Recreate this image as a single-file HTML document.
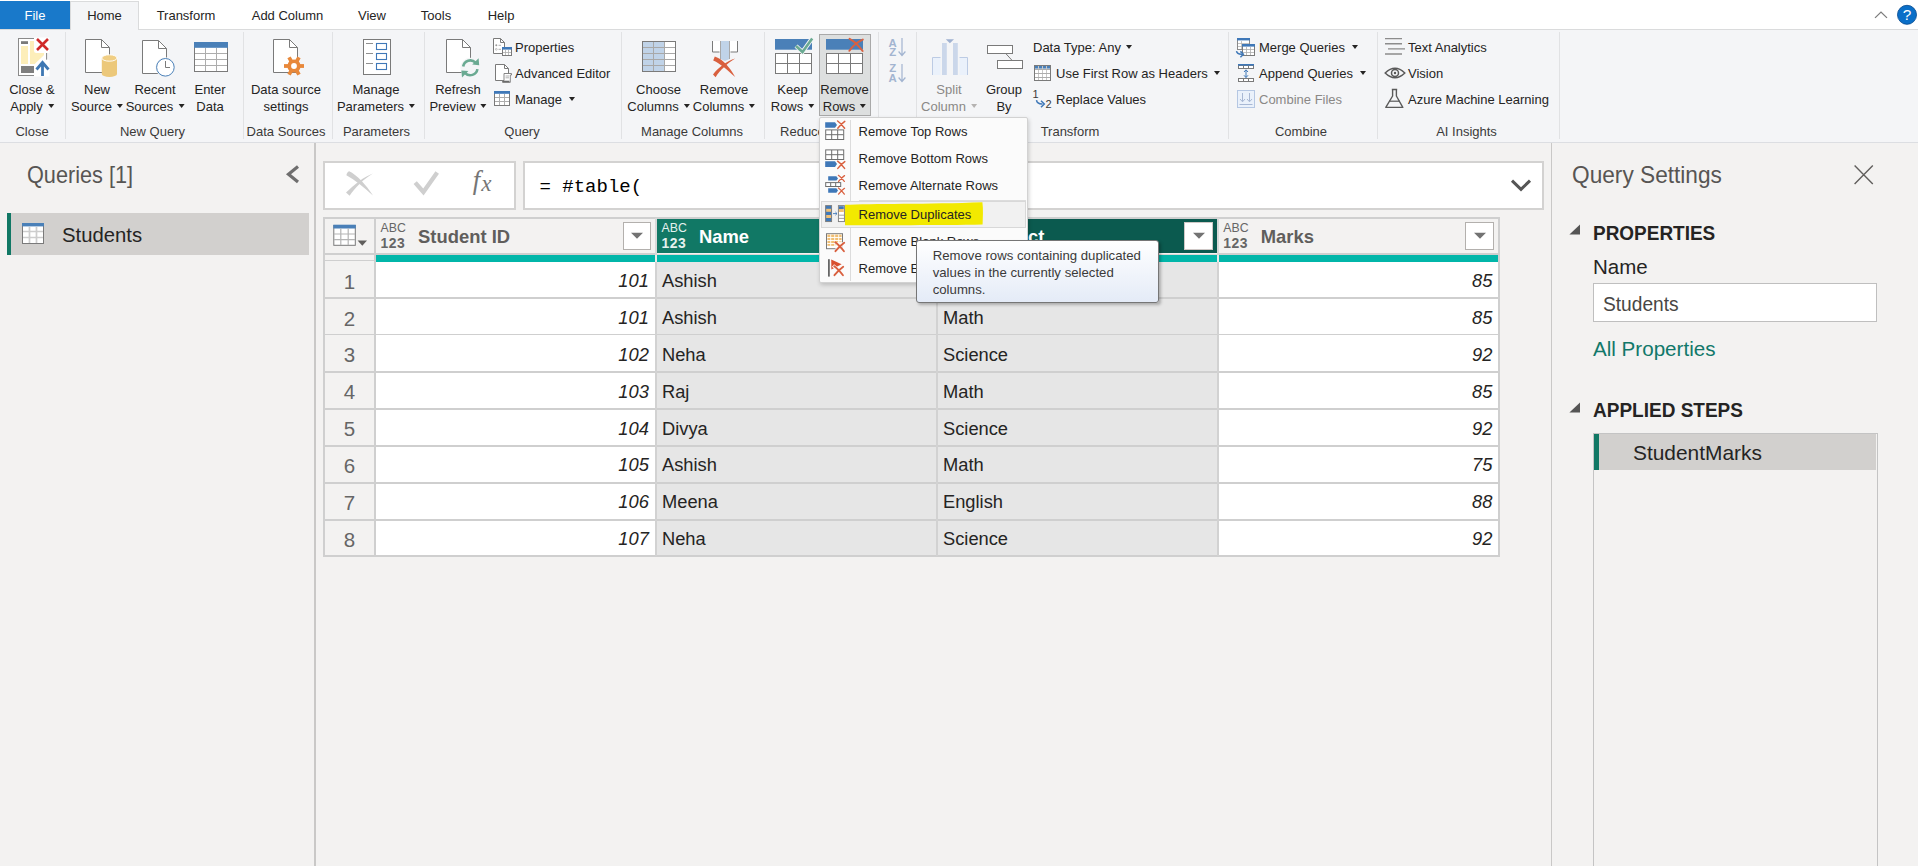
<!DOCTYPE html>
<html><head><meta charset="utf-8"><title>Power Query Editor</title>
<style>
*{box-sizing:border-box;margin:0;padding:0}
html,body{width:1918px;height:866px;overflow:hidden;background:#f3f2f1;font-family:"Liberation Sans",sans-serif;color:#252423}
.abs,.abs div,.abs svg,.abs span.p{position:absolute}
svg{overflow:visible}
#tabs{left:0;top:0;width:1918px;height:30px;background:#fff;border-bottom:1px solid #dadbdc}
#tabs .t{top:0;height:29px;font-size:13px;line-height:31px;text-align:center;color:#252423;white-space:nowrap}
#tabs #file{left:0;top:1px;width:70px;height:28px;background:#1979ca;color:#fff;line-height:29px}
#tabs #home{left:70px;top:1px;width:69px;height:29px;background:#f4f5f7;border:1px solid #dadbdc;border-bottom:none;line-height:28px}
#ribbon{left:0;top:30px;width:1918px;height:113px;background:#f4f5f7;border-bottom:1.3px solid #dcdee2}
.big{font-size:13px;line-height:17px;text-align:center;white-space:nowrap;color:#252423;top:81px;transform:translateX(-50%)}
.sm{font-size:13px;line-height:16px;white-space:nowrap;color:#252423}
.dis{color:#8a8886!important}
.grp{font-size:13px;line-height:15px;text-align:center;white-space:nowrap;color:#3b3a39;top:124px;transform:translateX(-50%)}
.sep{top:32px;width:1px;height:107px;background:#e1e2e4}
i.c{display:inline-block;width:0;height:0;border-left:3.5px solid transparent;border-right:3.5px solid transparent;border-top:4px solid #252423;vertical-align:middle;margin-left:5px;margin-top:-4px}
.dis i.c{border-top-color:#b5b3b1}
#menu .mi{left:38.8px;font-size:13px;line-height:16px;white-space:nowrap;color:#252423}
</style></head><body>
<div id="tabs" class="abs">
 <div id="file" class="t">File</div>
 <div id="home" class="t">Home</div>
 <div class="t" style="left:156px;width:60px">Transform</div>
 <div class="t" style="left:251px;width:73px">Add Column</div>
 <div class="t" style="left:358px;width:28px">View</div>
 <div class="t" style="left:420px;width:32px">Tools</div>
 <div class="t" style="left:487px;width:28px">Help</div>
 <svg style="left:1872px;top:8px" width="18" height="12" viewBox="1872 8 18 12"><path d="M1875 17.9 L1881 12.1 L1887 17.9" fill="none" stroke="#7c7c7c" stroke-width="1.3"/></svg>
 <svg style="left:1896px;top:4px" width="22" height="22" viewBox="1896 4 22 22"><circle cx="1907" cy="14.8" r="9.5" fill="#0a6fc8" stroke="#0b4f94" stroke-width=".9"/><text x="1907" y="20.4" font-family="Liberation Sans, sans-serif" font-size="15.4" fill="#fff" text-anchor="middle">?</text></svg>
</div>
<div id="ribbon" class="abs"></div>
<div id="rc" class="abs" style="left:0;top:0;width:1918px;height:142px">
<!-- separators -->
<div class="sep" style="left:65px"></div><div class="sep" style="left:243px"></div><div class="sep" style="left:332px"></div><div class="sep" style="left:424px"></div><div class="sep" style="left:621px"></div><div class="sep" style="left:764px"></div><div class="sep" style="left:878px"></div><div class="sep" style="left:916px"></div><div class="sep" style="left:1228px"></div><div class="sep" style="left:1377px"></div><div class="sep" style="left:1559px"></div>
<!-- group labels -->
<div class="grp" style="left:32px">Close</div>
<div class="grp" style="left:152.5px">New Query</div>
<div class="grp" style="left:286px">Data Sources</div>
<div class="grp" style="left:376.5px">Parameters</div>
<div class="grp" style="left:522px">Query</div>
<div class="grp" style="left:692px">Manage Columns</div>
<div class="grp" style="left:820.5px">Reduce Rows</div>
<div class="grp" style="left:897px">Sort</div>
<div class="grp" style="left:1070px">Transform</div>
<div class="grp" style="left:1301px">Combine</div>
<div class="grp" style="left:1466.5px">AI Insights</div>

<!-- Close & Apply -->
<svg style="left:17px;top:37px" width="33" height="40" viewBox="17 37 33 40">
 <rect x="18.5" y="38.5" width="28" height="37" fill="#fff" stroke="#8a8a8a"/>
 <rect x="21" y="41.2" width="7" height="2.8" fill="#7a7a7a"/>
 <rect x="21" y="46" width="7" height="18" fill="#fdeeba"/>
 <path d="M30 41 H44 V55 L35 64 H30 Z" fill="#fdeeba"/>
 <rect x="21" y="66" width="13" height="7" fill="#7f7f7f"/>
 <path d="M34 37.5 H49.5 V53 H36.5 Q34 53 34 50.5 Z" fill="#fff"/>
 <path d="M44 53 V56 L38 61 L34 65 V76.5 H49.5 V60 L46.6 59.6 V53 Z" fill="#fff"/>
 <path d="M46.6 53 V59.6" stroke="#8a8a8a" fill="none"/>
 <path d="M37 39 L48 50 M48 39 L37 50" stroke="#d02a2a" stroke-width="2.6" fill="none"/>
 <path d="M42.5 76 V64 M36.5 69.5 L42.5 62.5 L48.5 69.5" stroke="#3f78b3" stroke-width="2.8" fill="none"/>
</svg>
<div class="big" style="left:32px">Close &amp;<br>Apply<i class="c"></i></div>

<!-- New Source -->
<svg style="left:84px;top:38px" width="34" height="40" viewBox="84 38 34 40">
 <path d="M85.5 39.5 H101.5 L109.5 47.5 V72.5 H85.5 Z" fill="#fff" stroke="#7a7a7a"/>
 <path d="M101.5 39.5 V47.5 H109.5" fill="none" stroke="#7a7a7a"/>
 <path d="M101.8 58 V74 A7.6 3 0 0 0 117 74 V58 Z" fill="#ecc87a"/>
 <ellipse cx="109.4" cy="58" rx="7.6" ry="3.2" fill="#f0ce84" stroke="#fff" stroke-width="0.9"/>
 <path d="M101.8 58 V54.8" stroke="#ecc87a" stroke-width="0" />
</svg>
<div class="big" style="left:97px">New<br>Source<i class="c"></i></div>

<!-- Recent Sources -->
<svg style="left:141px;top:39px" width="36" height="40" viewBox="141 39 36 40">
 <path d="M142.5 40.5 H158.5 L166.5 48.5 V73.5 H142.5 Z" fill="#fff" stroke="#7a7a7a"/>
 <path d="M158.5 40.5 V48.5 H166.5" fill="none" stroke="#7a7a7a"/>
 <circle cx="165.4" cy="67.3" r="9" fill="#fff" stroke="#f4f5f7" stroke-width="2"/>
 <circle cx="165.4" cy="67.3" r="8.8" fill="#fff" stroke="#4a80b8" stroke-width="1"/>
 <path d="M165.5 61 V67.5 H170" fill="none" stroke="#7a7a7a"/>
</svg>
<div class="big" style="left:155px">Recent<br>Sources<i class="c"></i></div>

<!-- Enter Data -->
<svg style="left:193px;top:41px" width="36" height="32" viewBox="193 41 36 32">
 <rect x="194.5" y="42.5" width="33" height="29" fill="#fff" stroke="#7a7a7a"/>
 <rect x="194" y="42" width="34" height="5.8" fill="#4a80b8"/>
 <path d="M205.5 48 V71 M216.5 48 V71 M195 53.5 H227 M195 59.5 H227 M195 65.5 H227" stroke="#adadad" fill="none"/>
</svg>
<div class="big" style="left:210px">Enter<br>Data</div>

<!-- Data source settings -->
<svg style="left:272px;top:38px" width="34" height="40" viewBox="272 38 34 40">
 <path d="M273.5 39.5 H289.5 L297.5 47.5 V72.5 H273.5 Z" fill="#fff" stroke="#7a7a7a"/>
 <path d="M289.5 39.5 V47.5 H297.5" fill="none" stroke="#7a7a7a"/>
 <circle cx="294" cy="66" r="11" fill="#fff" opacity="0"/>
 <g transform="translate(294 66)">
  <circle r="10.5" fill="#f4f5f7" opacity="0"/>
  <g fill="#e8883a">
   <circle r="6.6"/>
   <rect x="-10" y="-1.9" width="20" height="3.8"/>
   <rect x="-10" y="-1.9" width="20" height="3.8" transform="rotate(60)"/>
   <rect x="-10" y="-1.9" width="20" height="3.8" transform="rotate(120)"/>
  </g>
  <circle r="2.9" fill="#fff"/>
 </g>
</svg>
<div class="big" style="left:286px">Data source<br>settings</div>

<!-- Manage Parameters -->
<svg style="left:362px;top:38px" width="30" height="38" viewBox="362 38 30 38">
 <rect x="363.5" y="39.5" width="27" height="35" fill="#fff" stroke="#7a7a7a"/>
 <path d="M366 43.5 H373 M366 53.5 H373 M366 63.5 H373" stroke="#8f8f8f" fill="none"/>
 <rect x="376.5" y="43.5" width="10" height="6" fill="#fff" stroke="#3f78b8" stroke-width="1.1"/>
 <rect x="376.5" y="53.5" width="10" height="6" fill="#fff" stroke="#3f78b8" stroke-width="1.1"/>
 <rect x="376.5" y="63.5" width="10" height="6" fill="#fff" stroke="#3f78b8" stroke-width="1.1"/>
</svg>
<div class="big" style="left:376px">Manage<br>Parameters<i class="c"></i></div>

<!-- Refresh Preview -->
<svg style="left:445px;top:38px" width="36" height="40" viewBox="445 38 36 40">
 <path d="M446.5 39.5 H462.5 L470.5 47.5 V72.5 H446.5 Z" fill="#fff" stroke="#7a7a7a"/>
 <path d="M462.5 39.5 V47.5 H470.5" fill="none" stroke="#7a7a7a"/>
 <circle cx="470.3" cy="67.8" r="10" fill="#f4f5f7"/>
 <g fill="none" stroke="#6aaa92" stroke-width="2.6">
  <path d="M463.2 66.5 A7.2 7.2 0 0 1 475.5 62.6"/>
  <path d="M477.4 69.1 A7.2 7.2 0 0 1 465.1 73"/>
 </g>
 <path d="M472.2 64.6 L479.2 65.2 L478.6 58.2 Z" fill="#6aaa92"/>
 <path d="M468.4 71 L461.4 70.4 L462 77.4 Z" fill="#6aaa92"/>
</svg>
<div class="big" style="left:458px">Refresh<br>Preview<i class="c"></i></div>

<!-- Properties -->
<svg style="left:492px;top:37px" width="22" height="20" viewBox="492 37 22 20">
 <path d="M493.5 38.5 H500.5 L504.5 42.5 V53.5 H493.5 Z" fill="#fff" stroke="#7a7a7a"/>
 <path d="M500.5 38.5 V42.5 H504.5" fill="none" stroke="#7a7a7a"/>
 <circle cx="496.3" cy="45.3" r="1" fill="#9a9a9a"/><circle cx="496.3" cy="49.3" r="0.9" fill="none" stroke="#9a9a9a" stroke-width=".6"/>
 <path d="M498.5 45.3 H501 M498.5 49.3 H501" stroke="#9a9a9a" stroke-width=".8"/>
 <rect x="502.5" y="47.5" width="9" height="8" fill="#fff" stroke="#7a7a7a"/>
 <rect x="502" y="47" width="10" height="2.6" fill="#3f78b8"/>
 <path d="M505.5 50 V55 M508.5 50 V55 M503 52.5 H511" stroke="#adadad" stroke-width=".8"/>
</svg>
<div class="sm" style="left:515px;top:40px">Properties</div>
<!-- Advanced Editor -->
<svg style="left:494px;top:63px" width="20" height="21" viewBox="494 63 20 21">
 <path d="M495.5 64.5 H504.5 L508.5 68.5 V80.5 H495.5 Z" fill="#fff" stroke="#7a7a7a"/>
 <path d="M504.5 64.5 V68.5 H508.5" fill="none" stroke="#7a7a7a"/>
 <path d="M504 73.5 H511.5 V75 H510.3 V82.4 H502.6 V80.6 H504 Z" fill="#fff" stroke="#7a7a7a" stroke-width=".9"/>
 <path d="M502.6 81.5 H509.5" stroke="#6a6a6a" stroke-width="1.6"/>
 <path d="M505.5 76 H509 M505.5 77.8 H509" stroke="#8f8f8f" stroke-width=".7"/>
</svg>
<div class="sm" style="left:515px;top:66px">Advanced Editor</div>
<!-- Manage -->
<svg style="left:493px;top:90px" width="18" height="17" viewBox="493 90 18 17">
 <rect x="494.5" y="91.5" width="15" height="14" fill="#fff" stroke="#7a7a7a"/>
 <rect x="494" y="91" width="16" height="2.8" fill="#3f78b8"/>
 <path d="M499.5 94 V105 M504.5 94 V105 M495 97.5 H509 M495 101.5 H509" stroke="#adadad"/>
</svg>
<div class="sm" style="left:515px;top:92px">Manage<i class="c" style="margin-left:7px"></i></div>
<!-- Choose Columns -->
<svg style="left:641px;top:40px" width="36" height="33" viewBox="641 40 36 33">
 <rect x="642.5" y="41.5" width="33" height="30" fill="#fff" stroke="#7a7a7a"/>
 <rect x="643" y="42" width="21.5" height="29" fill="#c0d3e8"/>
 <path d="M653.5 42 V71 M664.5 42 V71 M643 47.5 H675 M643 53.5 H675 M643 59.5 H675 M643 65.5 H675" stroke="#a8a8a8" fill="none"/>
 <rect x="642.5" y="41.5" width="33" height="30" fill="none" stroke="#7a7a7a"/>
</svg>
<div class="big" style="left:658.5px">Choose<br>Columns<i class="c"></i></div>
<!-- Remove Columns -->
<svg style="left:711px;top:40px" width="28" height="38" viewBox="711 40 28 38">
 <rect x="713" y="41" width="24" height="10.6" fill="#fff"/>
 <path d="M712.5 41 V52 H719.5 M730.5 52 H737.5 V41" fill="none" stroke="#7a7a7a" stroke-linejoin="miter"/>
 <path d="M720.5 41 V59 L725 61 L729.5 59 V41 Z" fill="#c0d3e8"/>
 <path d="M720.5 41 V59 M729.5 41 V59" stroke="#a8a8a8" fill="none"/>
 <path d="M714.8 56.6 C722.5 59 730 67.5 735.2 77 C728 70.5 720.5 63.5 713.2 60.4 Z" fill="#d9603f"/>
 <path d="M735.2 58.6 C727 61 718.5 67.5 713 74.4 L715.6 77.2 C720 70.5 727 63.5 735.2 58.6 Z" fill="#d9603f"/>
</svg>
<div class="big" style="left:724px">Remove<br>Columns<i class="c"></i></div>
<!-- Keep Rows -->
<svg style="left:774px;top:37px" width="40" height="38" viewBox="774 37 40 38">
 <rect x="775" y="39" width="37" height="10.7" fill="#4a80b8"/>
 <rect x="775.5" y="53.5" width="36" height="20" fill="#fff" stroke="#7a7a7a"/>
 <path d="M787.5 54 V73 M799.5 54 V73 M776 63.5 H811" stroke="#7a7a7a" fill="none"/>
 <path d="M796 46 L802.5 52 L812.2 38.4" fill="none" stroke="#f4f5f7" stroke-width="4.4"/>
 <path d="M796 46 L802.5 52 L812.2 38.4" fill="none" stroke="#6aaa92" stroke-width="2.6"/>
</svg>
<div class="big" style="left:792.5px">Keep<br>Rows<i class="c"></i></div>
<!-- Remove Rows (pressed) -->
<div style="left:819px;top:34px;width:52px;height:82px;background:#dddfdf;border:1px solid #a9a9a9"></div>
<svg style="left:825px;top:37px" width="40" height="38" viewBox="825 37 40 38">
 <rect x="826" y="39" width="37" height="10.7" fill="#4a80b8"/>
 <rect x="826.5" y="53.5" width="36" height="20" fill="#fff" stroke="#7a7a7a"/>
 <path d="M838.5 54 V73 M850.5 54 V73 M827 63.5 H862" stroke="#7a7a7a" fill="none"/>
 <path d="M849.6 38.8 C854 41 859 46 862.6 51" stroke="#d9603f" stroke-width="2" fill="none" stroke-linecap="round"/>
 <path d="M862.8 39.6 C857 42 852 47 849.4 50.8" stroke="#d9603f" stroke-width="2" fill="none" stroke-linecap="round"/>
</svg>
<div class="big" style="left:844.5px">Remove<br>Rows<i class="c"></i></div>
<!-- Sort icons -->
<svg style="left:886px;top:36px" width="22" height="48" viewBox="886 36 22 48">
 <g font-family="Liberation Sans, sans-serif" font-weight="bold" font-size="11.4" fill="#a2b4d0">
  <text x="888.6" y="46.7">A</text><text x="889.2" y="55.8">Z</text>
  <text x="889.2" y="71.8">Z</text><text x="888.6" y="81.5">A</text>
 </g>
 <g fill="none" stroke="#a2b4d0" stroke-width="1.2">
  <path d="M902 38 V55.5 M898.6 51.5 L902 55.5 L905.4 51.5"/>
  <path d="M902 64 V81.5 M898.6 77.5 L902 81.5 L905.4 77.5"/>
 </g>
</svg>
<!-- Split Column (disabled) -->
<svg style="left:931px;top:38px" width="38" height="38" viewBox="931 38 38 38">
 <path d="M932.5 75 V57.5 H940.5 V75 Z" fill="#eaf1fb"/><path d="M932.5 75 V57.5 H940.5" fill="none" stroke="#bccbe4"/>
 <path d="M959.5 75 V57.5 H967.5 V75 Z" fill="#eaf1fb"/><path d="M959.5 57.5 H967.5 V75" fill="none" stroke="#bccbe4"/>
 <rect x="942" y="43" width="4.8" height="32" fill="#cbd7ea"/>
 <rect x="953" y="43" width="4.8" height="32" fill="#cbd7ea"/>
 <path d="M945.8 39.2 H954 L949.9 43.2 Z" fill="#9fb1d0"/>
</svg>
<div class="big dis" style="left:949px">Split<br>Column<i class="c"></i></div>
<!-- Group By -->
<svg style="left:986px;top:44px" width="38" height="26" viewBox="986 44 38 26">
 <rect x="987.5" y="45.5" width="25" height="8" fill="#fff" stroke="#7a7a7a"/>
 <rect x="997.5" y="60.5" width="25" height="8" fill="#fff" stroke="#7a7a7a"/>
 <path d="M1006 53.8 L1012 60.3" stroke="#7a7a7a" fill="none"/>
</svg>
<div class="big" style="left:1004px">Group<br>By</div>
<!-- Data type etc -->
<div class="sm" style="left:1033px;top:40px">Data Type: Any<i class="c" style="margin-left:5px"></i></div>
<svg style="left:1033px;top:64px" width="20" height="18" viewBox="1033 64 20 18">
 <rect x="1034.5" y="65.5" width="16" height="15" fill="#fff" stroke="#7a7a7a"/>
 <rect x="1035" y="66" width="15" height="2.6" fill="#4a80b8"/>
 <path d="M1038.5 66 V80 M1042.5 66 V80 M1046.5 66 V80" stroke="#c8c8c8"/><path d="M1035 69.5 H1050 M1035 73.5 H1050 M1035 77.5 H1050" stroke="#adadad"/>
</svg>
<div class="sm" style="left:1056px;top:66px">Use First Row as Headers<i class="c" style="margin-left:6px"></i></div>
<svg style="left:1032px;top:88px" width="22" height="22" viewBox="1032 88 22 22">
 <g font-family="Liberation Sans, sans-serif" font-size="11" fill="#3b3a39"><text x="1032.6" y="98.2">1</text><text x="1045.6" y="108.4">2</text></g>
 <path d="M1036.5 100.2 Q1037 104.2 1042.5 104" fill="none" stroke="#3f78b8" stroke-width="1.5"/>
 <path d="M1041 100.8 L1044.3 104 L1041 107.2" fill="none" stroke="#3f78b8" stroke-width="1.5"/>
</svg>
<div class="sm" style="left:1056px;top:92px">Replace Values</div>
<!-- Merge Queries -->
<svg style="left:1235px;top:37px" width="22" height="21" viewBox="1235 37 22 21">
 <rect x="1237.5" y="38.5" width="12" height="11" fill="#fff" stroke="#8a8a8a"/>
 <rect x="1237" y="38" width="13" height="2.4" fill="#3f78b8"/>
 <path d="M1241.5 41 V49 M1238 43.5 H1249 M1238 46.5 H1249" stroke="#b5b5b5" stroke-width=".8"/>
 <rect x="1242.5" y="44.5" width="12" height="11" fill="#fff" stroke="#7a7a7a"/>
 <rect x="1242" y="44" width="13" height="2.6" fill="#3f78b8"/>
 <path d="M1246.5 47 V55 M1250.5 47 V55 M1243 49.5 H1254 M1243 52.5 H1254" stroke="#adadad" stroke-width=".8"/>
 <path d="M1236.5 51.2 Q1237 54.4 1242 54.2" fill="none" stroke="#3f78b8" stroke-width="1.5"/>
 <path d="M1240.4 51.4 L1243.4 54.3 L1240.4 57.2" fill="none" stroke="#3f78b8" stroke-width="1.5"/>
</svg>
<div class="sm" style="left:1259px;top:40px">Merge Queries<i class="c" style="margin-left:7px"></i></div>
<!-- Append Queries -->
<svg style="left:1237px;top:63px" width="18" height="20" viewBox="1237 63 18 20">
 <rect x="1238.5" y="65.5" width="15" height="3" fill="#fff" stroke="#7a7a7a"/>
 <rect x="1238" y="64" width="16" height="1.6" fill="#3f78b8"/>
 <path d="M1243.5 66 V68 M1248.5 66 V68" stroke="#7a7a7a"/>
 <rect x="1238.5" y="78.5" width="15" height="3" fill="#fff" stroke="#7a7a7a"/>
 <path d="M1243.5 79 V81 M1248.5 79 V81" stroke="#7a7a7a"/>
 <path d="M1246 70 V77.5 M1244 72 L1246 69.8 L1248 72 M1244 75.3 L1246 77.5 L1248 75.3" fill="none" stroke="#3f78b8" stroke-width="1"/>
</svg>
<div class="sm" style="left:1259px;top:66px">Append Queries<i class="c" style="margin-left:7px"></i></div>
<!-- Combine Files -->
<svg style="left:1236px;top:89px" width="20" height="20" viewBox="1236 89 20 20">
 <rect x="1237.5" y="90.5" width="17" height="17" fill="#eaf1fb" stroke="#b5c7e3"/>
 <path d="M1242.5 93 V101.5 M1240 99 L1242.5 101.8 L1245 99 M1249.5 93 V101.5 M1247 99 L1249.5 101.8 L1252 99" fill="none" stroke="#a8b8d4" stroke-width="1"/>
 <path d="M1239.5 104.5 H1252.5" stroke="#a8b8d4"/>
</svg>
<div class="sm dis" style="left:1259px;top:92px">Combine Files</div>
<!-- Text Analytics -->
<svg style="left:1384px;top:37px" width="22" height="19" viewBox="1384 37 22 19">
 <path d="M1385 38.6 H1402 M1385 43.7 H1402 M1388 48.9 H1405 M1385 54 H1402" stroke="#8c8c8c" stroke-width="1.4" fill="none"/>
</svg>
<div class="sm" style="left:1408px;top:40px">Text Analytics</div>
<!-- Vision -->
<svg style="left:1384px;top:66px" width="22" height="14" viewBox="1384 66 22 14">
 <path d="M1385.2 73 Q1395 63.5 1404.8 73 Q1395 82.5 1385.2 73 Z" fill="none" stroke="#5a5a5a" stroke-width="1.5"/>
 <circle cx="1395" cy="73" r="3.5" fill="none" stroke="#5a5a5a" stroke-width="1.5"/>
 <circle cx="1395" cy="73" r="1.2" fill="#5a5a5a"/>
</svg>
<div class="sm" style="left:1408px;top:66px">Vision</div>
<!-- Azure ML -->
<svg style="left:1384px;top:88px" width="20" height="21" viewBox="1384 88 20 21">
 <path d="M1391.8 89.5 H1397.2 M1392.6 89.8 V96 L1385.8 107.4 H1402.8 L1396.4 96 V89.8" fill="none" stroke="#5a5a5a" stroke-width="1.4" stroke-linejoin="round"/>
 <path d="M1389.2 101.2 H1399.6" stroke="#5a5a5a" stroke-width="1.2"/>
</svg>
<div class="sm" style="left:1408px;top:92px">Azure Machine Learning</div>
</div>
<div id="left" class="abs" style="left:0;top:143px;width:317px;height:723px">
 <div style="left:313.9px;top:0.3px;width:1.8px;height:723px;background:#c9c8c7"></div>
 <div style="left:27px;top:16.5px;font-size:24px;line-height:30px;white-space:nowrap;color:#575553;transform:scaleX(.903);transform-origin:0 0">Queries [1]</div>
 <svg style="left:284px;top:20px" width="18" height="22" viewBox="284 163 18 22"><path d="M298 166.5 L288.5 174.2 L298 182" fill="none" stroke="#6e6e6e" stroke-width="3.2"/></svg>
 <div style="left:7px;top:70px;width:302px;height:42px;background:#d2d0ce"></div>
 <div style="left:7px;top:70px;width:4px;height:42px;background:#117865"></div>
 <svg style="left:21px;top:79px" width="24" height="22" viewBox="21 222 24 22">
  <rect x="22.5" y="223.5" width="21" height="20" fill="#fff" stroke="#7a7a7a"/>
  <rect x="22" y="223" width="22" height="3.4" fill="#4a80b8"/>
  <path d="M29.5 227 V243 M36.5 227 V243 M23 231.5 H43 M23 237.5 H43" stroke="#cdcdcd" stroke-width="1.7"/>
 </svg>
 <div style="left:62px;top:78px;font-size:20.3px;line-height:28px;white-space:nowrap;color:#252423">Students</div>
</div>
<div id="center" class="abs" style="left:0;top:0;width:1551px;height:866px">
<div style="left:323px;top:161px;width:193px;height:49px;background:#fff;border:2.2px solid #d3d2d1"></div>
<div style="left:522.5px;top:161px;width:1021.5px;height:49px;background:#fff;border:2.2px solid #d3d2d1"></div>
<svg style="left:345px;top:170px" width="30" height="28" viewBox="345 170 30 28"><path d="M349.2 171.2 C356.5 174.5 366 184.5 373 195.6 C364.5 187.5 355 180 346.4 175.2 C346.8 173 347.6 171.8 349.2 171.2 Z" fill="#cfcfcf"/><path d="M373 173.4 C364 176.5 354 184.5 346 192.6 L349.6 195.8 C355 187.5 363.5 179 373 173.4 Z" fill="#cfcfcf"/></svg>
<svg style="left:413px;top:170px" width="28" height="28" viewBox="413 170 28 28"><path d="M415.2 182.6 L423.4 192 L437.2 172.6" stroke="#cfcfcf" stroke-width="4.3" fill="none" stroke-linejoin="miter"/></svg>
<div style="left:472.8px;top:163.2px;font-family:'Liberation Serif',serif;font-style:italic;font-size:26.5px;line-height:34px;color:#757575;white-space:nowrap;letter-spacing:0.6px">f<span style="font-size:23px;position:relative;top:2.3px;left:0.5px">x</span></div>
<div style="left:539.5px;top:173.5px;font-family:'Liberation Mono',monospace;font-size:19px;line-height:26px;color:#000;white-space:pre">= #table(</div>
<svg style="left:1510px;top:178px" width="22" height="14" viewBox="1510 178 22 14"><path d="M1512 180.6 L1521 189.4 L1530 180.6" fill="none" stroke="#555" stroke-width="3"/></svg>
<div style="left:324px;top:218px;width:1174.8px;height:337.9px;background:#fff"></div>
<div style="left:324px;top:218px;width:51.1px;height:337.9px;background:#f3f2f1"></div>
<div style="left:375.1px;top:218px;width:1123.7px;height:36px;background:#f3f2f1"></div>
<div style="left:656.9px;top:218.9px;width:279.9px;height:34.6px;background:#117865"></div>
<div style="left:937.7px;top:218.9px;width:280.1px;height:34.6px;background:#0b5a4f"></div>
<div style="left:656px;top:261.9px;width:561.8px;height:294px;background:#e6e6e6"></div>
<div style="left:376px;top:255px;width:1122.8px;height:6.9px;background:#01b6a9"></div>
<div style="left:323.15px;top:217.15px;width:1176.5px;height:1.7px;background:#cfcfcf"></div>
<div style="left:324px;top:253.15px;width:332px;height:1.7px;background:#cfcfcf"></div>
<div style="left:1217.8px;top:253.15px;width:281px;height:1.7px;background:#cfcfcf"></div>
<div style="left:656px;top:253.5px;width:561.8px;height:1.4px;background:#ddd8d6"></div>
<div style="left:324px;top:260.1px;width:51.1px;height:1.4px;background:#cfcfcf"></div>
<div style="left:323.15px;top:296.85px;width:1176.5px;height:1.7px;background:#cfcfcf"></div>
<div style="left:323.15px;top:333.75px;width:1176.5px;height:1.7px;background:#cfcfcf"></div>
<div style="left:323.15px;top:370.85px;width:1176.5px;height:1.7px;background:#cfcfcf"></div>
<div style="left:323.15px;top:408.05px;width:1176.5px;height:1.7px;background:#cfcfcf"></div>
<div style="left:323.15px;top:445.15px;width:1176.5px;height:1.7px;background:#cfcfcf"></div>
<div style="left:323.15px;top:482.05px;width:1176.5px;height:1.7px;background:#cfcfcf"></div>
<div style="left:323.15px;top:519.1px;width:1176.5px;height:1.7px;background:#cfcfcf"></div>
<div style="left:323.15px;top:555.05px;width:1176.5px;height:1.7px;background:#cfcfcf"></div>
<div style="left:323.15px;top:218px;width:1.7px;height:337.9px;background:#cfcfcf"></div>
<div style="left:374.25px;top:218px;width:1.7px;height:337.9px;background:#cfcfcf"></div>
<div style="left:1497.95px;top:218px;width:1.7px;height:337.9px;background:#cfcfcf"></div>
<div style="left:655.15px;top:218px;width:1.7px;height:37px;background:#d8d8d8"></div>
<div style="left:655.15px;top:261.9px;width:1.7px;height:294px;background:#d2d2d2"></div>
<div style="left:655.15px;top:255px;width:1.7px;height:6.9px;background:#eceae8"></div>
<div style="left:935.95px;top:218px;width:1.7px;height:37px;background:#d8d8d8"></div>
<div style="left:935.95px;top:261.9px;width:1.7px;height:294px;background:#d2d2d2"></div>
<div style="left:935.95px;top:255px;width:1.7px;height:6.9px;background:#eceae8"></div>
<div style="left:1216.95px;top:218px;width:1.7px;height:37px;background:#d8d8d8"></div>
<div style="left:1216.95px;top:261.9px;width:1.7px;height:294px;background:#d2d2d2"></div>
<div style="left:1216.95px;top:255px;width:1.7px;height:6.9px;background:#eceae8"></div>
<svg style="left:332px;top:223px" width="38" height="24" viewBox="332 223 38 24"><rect x="333.8" y="225.5" width="21.5" height="19.8" fill="#fff" stroke="#7a7a7a"/><rect x="333.3" y="224.7" width="22.5" height="3.8" fill="#4a80b8"/><path d="M340.8 228.5 V245 M348.2 228.5 V245 M334 234 H355 M334 239.7 H355" stroke="#b4b4b4" stroke-width="1.2"/><path d="M357.6 240.5 H367 L362.3 245.7 Z" fill="#605e5c"/></svg>
<div style="left:380.5px;top:222.4px;font-size:12.3px;line-height:13px;color:#666;white-space:nowrap;letter-spacing:.1px">ABC</div>
<div style="left:380.5px;top:236.2px;font-size:13.9px;font-weight:bold;line-height:15px;color:#666;white-space:nowrap;letter-spacing:.55px">123</div>
<div style="left:418.1px;top:224.7px;font-size:18.4px;font-weight:bold;line-height:24px;color:#605e5c;white-space:nowrap">Student ID</div>
<div style="left:622.6px;top:221.9px;width:28.6px;height:28px;background:#fff;border:1.3px solid #b3b0ad"></div>
<svg style="left:630px;top:232.3px" width="14" height="8" viewBox="0 0 14 8"><path d="M1 0.8 H13 L7 6.8 Z" fill="#737373"/></svg>
<div style="left:661.4px;top:222.4px;font-size:12.3px;line-height:13px;color:#e4f1ee;white-space:nowrap;letter-spacing:.1px">ABC</div>
<div style="left:661.4px;top:236.2px;font-size:13.9px;font-weight:bold;line-height:15px;color:#e4f1ee;white-space:nowrap;letter-spacing:.55px">123</div>
<div style="left:699px;top:224.7px;font-size:18.4px;font-weight:bold;line-height:24px;color:#fff;white-space:nowrap">Name</div>
<div style="left:903.4px;top:221.9px;width:28.6px;height:28px;background:#fff;border:1.3px solid #cfc8c6"></div>
<svg style="left:910.8px;top:232.3px" width="14" height="8" viewBox="0 0 14 8"><path d="M1 0.8 H13 L7 6.8 Z" fill="#737373"/></svg>
<div style="left:942.2px;top:222.4px;font-size:12.3px;line-height:13px;color:#e4f1ee;white-space:nowrap;letter-spacing:.1px">ABC</div>
<div style="left:942.2px;top:236.2px;font-size:13.9px;font-weight:bold;line-height:15px;color:#e4f1ee;white-space:nowrap;letter-spacing:.55px">123</div>
<div style="left:978px;top:224.7px;font-size:18.4px;font-weight:bold;line-height:24px;color:#fff;white-space:nowrap">Subject</div>
<div style="left:1184.4px;top:221.9px;width:28.6px;height:28px;background:#fff;border:1.3px solid #cfc8c6"></div>
<svg style="left:1191.8px;top:232.3px" width="14" height="8" viewBox="0 0 14 8"><path d="M1 0.8 H13 L7 6.8 Z" fill="#737373"/></svg>
<div style="left:1223.2px;top:222.4px;font-size:12.3px;line-height:13px;color:#666;white-space:nowrap;letter-spacing:.1px">ABC</div>
<div style="left:1223.2px;top:236.2px;font-size:13.9px;font-weight:bold;line-height:15px;color:#666;white-space:nowrap;letter-spacing:.55px">123</div>
<div style="left:1260.8px;top:224.7px;font-size:18.4px;font-weight:bold;line-height:24px;color:#605e5c;white-space:nowrap">Marks</div>
<div style="left:1465.4px;top:221.9px;width:28.6px;height:28px;background:#fff;border:1.3px solid #b3b0ad"></div>
<svg style="left:1472.8px;top:232.3px" width="14" height="8" viewBox="0 0 14 8"><path d="M1 0.8 H13 L7 6.8 Z" fill="#737373"/></svg>
<div style="left:324px;top:268.62px;width:51.1px;text-align:center;font-size:20.5px;line-height:26px;color:#666">1</div>
<div style="right:902.2px;top:267.95px;font-size:18.3px;line-height:26px;color:#252423;white-space:nowrap;font-style:italic">101</div>
<div style="left:662px;top:267.95px;font-size:18.3px;line-height:26px;color:#252423;white-space:nowrap">Ashish</div>
<div style="left:943px;top:267.95px;font-size:18.3px;line-height:26px;color:#252423;white-space:nowrap">Math</div>
<div style="right:58.7px;top:267.95px;font-size:18.3px;line-height:26px;color:#252423;white-space:nowrap;font-style:italic">85</div>
<div style="left:324px;top:305.52px;width:51.1px;text-align:center;font-size:20.5px;line-height:26px;color:#666">2</div>
<div style="right:902.2px;top:304.85px;font-size:18.3px;line-height:26px;color:#252423;white-space:nowrap;font-style:italic">101</div>
<div style="left:662px;top:304.85px;font-size:18.3px;line-height:26px;color:#252423;white-space:nowrap">Ashish</div>
<div style="left:943px;top:304.85px;font-size:18.3px;line-height:26px;color:#252423;white-space:nowrap">Math</div>
<div style="right:58.7px;top:304.85px;font-size:18.3px;line-height:26px;color:#252423;white-space:nowrap;font-style:italic">85</div>
<div style="left:324px;top:342.42px;width:51.1px;text-align:center;font-size:20.5px;line-height:26px;color:#666">3</div>
<div style="right:902.2px;top:341.75px;font-size:18.3px;line-height:26px;color:#252423;white-space:nowrap;font-style:italic">102</div>
<div style="left:662px;top:341.75px;font-size:18.3px;line-height:26px;color:#252423;white-space:nowrap">Neha</div>
<div style="left:943px;top:341.75px;font-size:18.3px;line-height:26px;color:#252423;white-space:nowrap">Science</div>
<div style="right:58.7px;top:341.75px;font-size:18.3px;line-height:26px;color:#252423;white-space:nowrap;font-style:italic">92</div>
<div style="left:324px;top:379.42px;width:51.1px;text-align:center;font-size:20.5px;line-height:26px;color:#666">4</div>
<div style="right:902.2px;top:378.75px;font-size:18.3px;line-height:26px;color:#252423;white-space:nowrap;font-style:italic">103</div>
<div style="left:662px;top:378.75px;font-size:18.3px;line-height:26px;color:#252423;white-space:nowrap">Raj</div>
<div style="left:943px;top:378.75px;font-size:18.3px;line-height:26px;color:#252423;white-space:nowrap">Math</div>
<div style="right:58.7px;top:378.75px;font-size:18.3px;line-height:26px;color:#252423;white-space:nowrap;font-style:italic">85</div>
<div style="left:324px;top:416.32px;width:51.1px;text-align:center;font-size:20.5px;line-height:26px;color:#666">5</div>
<div style="right:902.2px;top:415.65px;font-size:18.3px;line-height:26px;color:#252423;white-space:nowrap;font-style:italic">104</div>
<div style="left:662px;top:415.65px;font-size:18.3px;line-height:26px;color:#252423;white-space:nowrap">Divya</div>
<div style="left:943px;top:415.65px;font-size:18.3px;line-height:26px;color:#252423;white-space:nowrap">Science</div>
<div style="right:58.7px;top:415.65px;font-size:18.3px;line-height:26px;color:#252423;white-space:nowrap;font-style:italic">92</div>
<div style="left:324px;top:453.12px;width:51.1px;text-align:center;font-size:20.5px;line-height:26px;color:#666">6</div>
<div style="right:902.2px;top:452.45px;font-size:18.3px;line-height:26px;color:#252423;white-space:nowrap;font-style:italic">105</div>
<div style="left:662px;top:452.45px;font-size:18.3px;line-height:26px;color:#252423;white-space:nowrap">Ashish</div>
<div style="left:943px;top:452.45px;font-size:18.3px;line-height:26px;color:#252423;white-space:nowrap">Math</div>
<div style="right:58.7px;top:452.45px;font-size:18.3px;line-height:26px;color:#252423;white-space:nowrap;font-style:italic">75</div>
<div style="left:324px;top:489.92px;width:51.1px;text-align:center;font-size:20.5px;line-height:26px;color:#666">7</div>
<div style="right:902.2px;top:489.25px;font-size:18.3px;line-height:26px;color:#252423;white-space:nowrap;font-style:italic">106</div>
<div style="left:662px;top:489.25px;font-size:18.3px;line-height:26px;color:#252423;white-space:nowrap">Meena</div>
<div style="left:943px;top:489.25px;font-size:18.3px;line-height:26px;color:#252423;white-space:nowrap">English</div>
<div style="right:58.7px;top:489.25px;font-size:18.3px;line-height:26px;color:#252423;white-space:nowrap;font-style:italic">88</div>
<div style="left:324px;top:526.62px;width:51.1px;text-align:center;font-size:20.5px;line-height:26px;color:#666">8</div>
<div style="right:902.2px;top:525.95px;font-size:18.3px;line-height:26px;color:#252423;white-space:nowrap;font-style:italic">107</div>
<div style="left:662px;top:525.95px;font-size:18.3px;line-height:26px;color:#252423;white-space:nowrap">Neha</div>
<div style="left:943px;top:525.95px;font-size:18.3px;line-height:26px;color:#252423;white-space:nowrap">Science</div>
<div style="right:58.7px;top:525.95px;font-size:18.3px;line-height:26px;color:#252423;white-space:nowrap;font-style:italic">92</div>
</div>
<div id="right" class="abs" style="left:1551px;top:143px;width:367px;height:723px">
 <div style="left:-0.5px;top:0.3px;width:1.8px;height:723px;background:#c9c8c7"></div>
 <div style="left:21px;top:17px;font-size:24.5px;line-height:30px;white-space:nowrap;color:#575553;transform:scaleX(.925);transform-origin:0 0">Query Settings</div>
 <svg style="left:302px;top:21px" width="22" height="22" viewBox="1853 164 22 22"><path d="M1854.6 165.6 L1872.8 184 M1872.8 165.6 L1854.6 184" fill="none" stroke="#605e5c" stroke-width="1.4"/></svg>
 <svg style="left:18px;top:81.3px" width="12" height="11" viewBox="0 0 12 11"><path d="M0.4 10.4 H11 V0.6 Z" fill="#555"/></svg>
 <div style="left:42px;top:77px;font-size:20.5px;font-weight:bold;line-height:26px;white-space:nowrap;color:#252423;transform:scaleX(.925);transform-origin:0 0">PROPERTIES</div>
 <div style="left:42px;top:111px;font-size:20.5px;line-height:26px;white-space:nowrap;color:#252423">Name</div>
 <div style="left:42px;top:140px;width:284px;height:38.5px;background:#fff;border:1.5px solid #bfbfbf"></div>
 <div style="left:52px;top:148px;font-size:20.5px;line-height:26px;white-space:nowrap;color:#484644;transform:scaleX(.935);transform-origin:0 0">Students</div>
 <div style="left:42px;top:192.5px;font-size:20.6px;line-height:26px;white-space:nowrap;color:#11786a">All Properties</div>
 <svg style="left:18px;top:258.5px" width="12" height="11" viewBox="0 0 12 11"><path d="M0.4 10.4 H11 V0.6 Z" fill="#555"/></svg>
 <div style="left:42px;top:254px;font-size:20.5px;font-weight:bold;line-height:26px;white-space:nowrap;color:#252423;transform:scaleX(.927);transform-origin:0 0">APPLIED STEPS</div>
 <div style="left:42.2px;top:289.8px;width:284.4px;height:440px;border:1.8px solid #c4c4c4;background:#f3f2f1"></div>
 <div style="left:44px;top:291px;width:281px;height:35.5px;background:#d2d0ce"></div>
 <div style="left:43px;top:291px;width:4.5px;height:35.5px;background:#117865"></div>
 <div style="left:82px;top:297px;font-size:20.9px;line-height:26px;white-space:nowrap;color:#252423">StudentMarks</div>
</div>
<div id="menu" class="abs" style="left:818.8px;top:116.5px;width:209.6px;height:166.4px;background:#fbfbfb;border:1px solid #d2d2d2;border-radius:2px;box-shadow:1px 2px 4px rgba(0,0,0,.18)">
 <div style="left:30px;top:2px;width:1px;height:161px;background:#dcdcdc"></div>
 <div style="left:39px;top:82.2px;width:167px;height:1px;background:#dcdcdc"></div>
 <div style="left:1.4px;top:83.7px;width:204.8px;height:26.5px;background:#f1f1f1;border:1px solid #d8d8d8"></div>
 <svg style="left:24.2px;top:83.6px" width="140" height="26" viewBox="844 201 140 26"><path d="M845 204.8 C870 203.6 930 204.2 982.4 202.2 C983.4 209 982.8 218 982.6 224.6 C940 225.6 880 225 845 225.2 Z" fill="#f2e900"/></svg>
 <div class="mi" style="top:6px">Remove Top Rows</div>
 <div class="mi" style="top:33px">Remove Bottom Rows</div>
 <div class="mi" style="top:60px">Remove Alternate Rows</div>
 <div class="mi" style="top:89px">Remove Duplicates</div>
 <div class="mi" style="top:116px">Remove Blank Rows</div>
 <div class="mi" style="top:143px">Remove Errors</div>
 <!-- icons: viewBox in page coords, offset by menu origin (821,118) -->
 <svg style="left:4.2px;top:2.5px" width="24" height="162" viewBox="824 120 24 162">
  <!-- 1 top rows -->
  <path d="M825.2 122.3 H835 L837 125 L835 127.8 H825.2 Z" fill="#3f78b8"/>
  <path d="M0 0 C2.4 1.6 5 4.6 7 7.2 M7.2 0.4 C4.6 2.2 2 5 0.2 7.2" stroke="#d9603f" stroke-width="1.5" fill="none" stroke-linecap="round" transform="translate(837.6 121)"/>
  <rect x="825.7" y="129.9" width="18" height="9.6" fill="#fff" stroke="#6e6e6e"/>
  <path d="M831.7 130 V139.5 M837.7 130 V139.5 M826 134.7 H843.5" stroke="#6e6e6e" fill="none"/>
  <!-- 2 bottom rows -->
  <rect x="825.7" y="149.9" width="18" height="9.6" fill="#fff" stroke="#6e6e6e"/>
  <path d="M831.7 150 V159.5 M837.7 150 V159.5 M826 154.7 H843.5" stroke="#6e6e6e" fill="none"/>
  <path d="M825.2 161.3 H835 L837 164.1 L835 167 H825.2 Z" fill="#3f78b8"/>
  <path d="M0 0 C2.4 1.6 5 4.6 7 7.2 M7.2 0.4 C4.6 2.2 2 5 0.2 7.2" stroke="#d9603f" stroke-width="1.5" fill="none" stroke-linecap="round" transform="translate(837.6 161.2)"/>
  <!-- 3 alternate rows -->
  <path d="M828.2 176.2 H836.4 L838 178.4 L836.4 180.6 H828.2 Z" fill="#3f78b8"/>
  <path d="M0 0 C2.4 1.6 5 4.6 7 7.2 M7.2 0.4 C4.6 2.2 2 5 0.2 7.2" stroke="#d9603f" stroke-width="1.5" fill="none" stroke-linecap="round" transform="translate(838.4 175.3) scale(.85)"/>
  <rect x="825.7" y="182.6" width="15" height="3.9" fill="#fff" stroke="#6e6e6e"/>
  <path d="M830.7 183 V186.5 M835.7 183 V186.5" stroke="#6e6e6e"/>
  <path d="M828.2 188.3 H836.4 L838 190.5 L836.4 192.8 H828.2 Z" fill="#3f78b8"/>
  <path d="M0 0 C2.4 1.6 5 4.6 7 7.2 M7.2 0.4 C4.6 2.2 2 5 0.2 7.2" stroke="#d9603f" stroke-width="1.5" fill="none" stroke-linecap="round" transform="translate(838.4 188) scale(.85)"/>
  <!-- 4 duplicates -->
  <rect x="825.6" y="205.6" width="6" height="16" fill="#3f78b8" stroke="#7a7a7a" stroke-width=".9"/>
  <rect x="826.2" y="208.8" width="4.8" height="3" fill="#f1bf74"/><rect x="826.2" y="215" width="4.8" height="3" fill="#f1bf74"/>
  <rect x="838.4" y="205.6" width="6" height="16" fill="#fff" stroke="#7a7a7a" stroke-width=".9"/>
  <rect x="839" y="206.2" width="4.8" height="2.8" fill="#3f78b8"/><rect x="839" y="209" width="4.8" height="3" fill="#f1bf74"/>
  <path d="M839 215.2 H844 M839 218.4 H844" stroke="#8a8a8a" stroke-width=".8"/>
  <path d="M833 213.6 H837 M835.4 212 L837 213.6 L835.4 215.2" fill="none" stroke="#3f78b8" stroke-width=".9"/>
  <!-- 5 blank rows -->
  <rect x="826.5" y="233.7" width="16" height="15" fill="#fff" stroke="#7a7a7a"/>
  <g fill="#f1bf74"><rect x="827.4" y="234.6" width="14.2" height="11.4"/></g>
  <path d="M830.7 234.4 V248 M834.7 234.4 V248 M838.7 234.4 V248 M827 237.5 H842 M827 240.5 H842 M827 243.5 H842 M827 246.3 H842" stroke="#fff" stroke-width=".9"/>
  <circle cx="840" cy="246.5" r="5" fill="#fbfbfb" opacity=".85"/>
  <path d="M0 0 C2.4 1.6 5 4.6 7 7.2 M7.2 0.4 C4.6 2.2 2 5 0.2 7.2" stroke="#d9603f" stroke-width="1.5" fill="none" stroke-linecap="round" transform="translate(835.2 242.2) scale(1.25)"/>
  <!-- 6 errors -->
  <rect x="828" y="259.2" width="1.8" height="17.4" fill="#666"/>
  <path d="M831.2 259.6 L841.6 264.2 L831.4 269.4 Z" fill="#d9502f"/>
  <path d="M833 265.5 L839 270.5" stroke="#fbfbfb" stroke-width="3.5"/>
  <path d="M0 0 C2.4 1.6 5 4.6 7 7.2 M7.2 0.4 C4.6 2.2 2 5 0.2 7.2" stroke="#d9603f" stroke-width="1.5" fill="none" stroke-linecap="round" transform="translate(834.2 266.2) scale(1.25)"/>
 </svg>
</div>
<div id="tip" class="abs" style="left:915.7px;top:240px;width:243.4px;height:63.4px;border:1px solid #767676;border-radius:3px;background:linear-gradient(#ffffff,#e4ebf7);box-shadow:2px 2px 3px rgba(0,0,0,.25)">
 <div style="left:16px;top:5.5px;font-size:13.2px;line-height:17px;color:#3b3a39;white-space:nowrap">Remove rows containing duplicated<br>values in the currently selected<br>columns.</div>
</div>
</body></html>
